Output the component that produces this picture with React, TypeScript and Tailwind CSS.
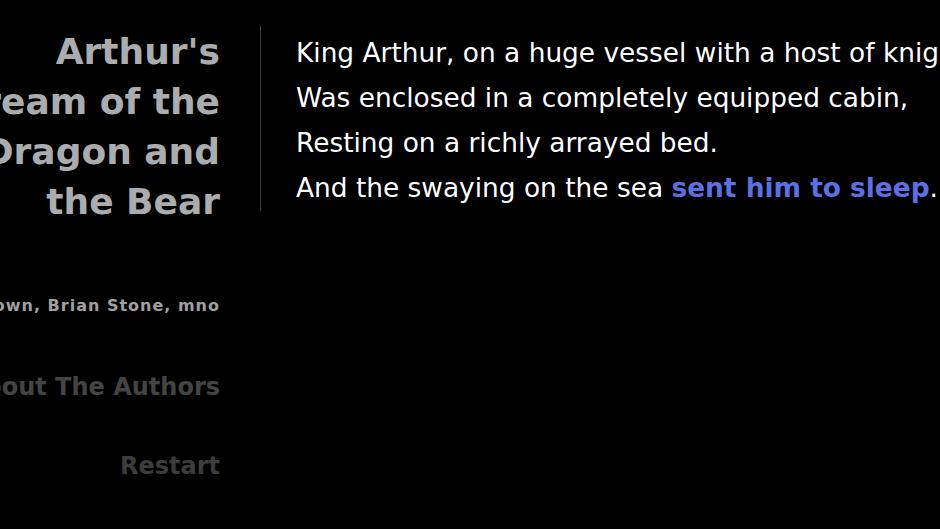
import React from "react";

export default function App() {
  const font = { fontFamily: "'DejaVu Sans', Verdana, sans-serif" };
  return (
    <div className="w-[940px] h-[529px] bg-black overflow-hidden flex" style={font}>
      <div className="w-[220px] shrink-0 flex flex-col items-end text-right pt-[27px]">
        <h1 className="text-[36px] leading-[50px] font-bold text-[#abacae] whitespace-nowrap">
          <div>Arthur's</div>
          <div>Dream of the</div>
          <div>Dragon and</div>
          <div>the Bear</div>
        </h1>
        <div className="mt-[69px] text-[16px] tracking-[1px] leading-[20px] font-bold text-[#a0a0a2] whitespace-nowrap">
          Thomas Malory, Brown, Brian Stone, mno
        </div>
        <div className="mt-[56px] text-[24px] leading-[30px] font-bold text-[#444444] whitespace-nowrap">About The Authors</div>
        <div className="mt-[49px] text-[24px] leading-[30px] font-bold text-[#3c3c3c] whitespace-nowrap">Restart</div>
      </div>
      <div className="ml-[40px] mt-[26px] w-px h-[185px] bg-[#3a3a3a] shrink-0" />
      <div className="ml-[35px] pt-[30px] text-[26.4px] leading-[45px] text-white whitespace-nowrap">
        <div>King Arthur, on a huge vessel with a host of knights,</div>
        <div>Was enclosed in a completely equipped cabin,</div>
        <div>Resting on a richly arrayed bed.</div>
        <div>
          And the swaying on the sea <span className="font-bold text-[#5b70e3]">sent him to sleep</span>.
        </div>
      </div>
    </div>
  );
}
